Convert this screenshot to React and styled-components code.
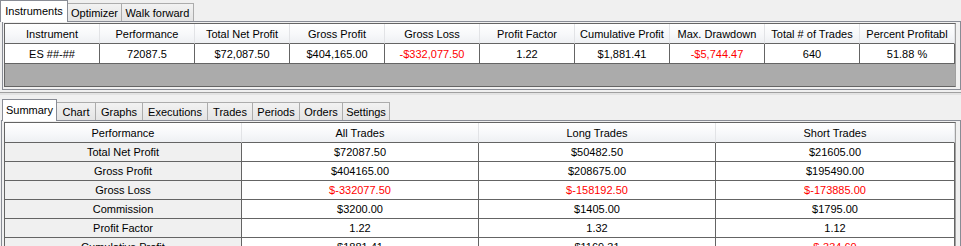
/*--------------------------
    Import
--------------------------*/
import React from 'react';
import styled, { createGlobalStyle } from 'styled-components';

/*--------------------------
    Variable
--------------------------*/
const TOP_TABS = [
    { label: 'Instruments', width: 68, active: true },
    { label: 'Optimizer', width: 54 },
    { label: 'Walk forward', width: 72 },
];

const BOTTOM_TABS = [
    { label: 'Summary', width: 55, active: true },
    { label: 'Chart', width: 39 },
    { label: 'Graphs', width: 47 },
    { label: 'Executions', width: 65 },
    { label: 'Trades', width: 45 },
    { label: 'Periods', width: 47 },
    { label: 'Orders', width: 43 },
    { label: 'Settings', width: 47 },
];

const INSTRUMENT_HEADERS = [
    'Instrument', 'Performance', 'Total Net Profit', 'Gross Profit', 'Gross Loss',
    'Profit Factor', 'Cumulative Profit', 'Max. Drawdown', 'Total # of Trades', 'Percent Profitabl',
];

const INSTRUMENT_ROW = [
    { v: 'ES ##-##' },
    { v: '72087.5' },
    { v: '$72,087.50' },
    { v: '$404,165.00' },
    { v: '-$332,077.50', neg: true },
    { v: '1.22' },
    { v: '$1,881.41' },
    { v: '-$5,744.47', neg: true },
    { v: '640' },
    { v: '51.88 %' },
];

const SUMMARY_HEADERS = ['Performance', 'All Trades', 'Long Trades', 'Short Trades'];

const SUMMARY_ROWS = [
    { label: 'Total Net Profit', values: ['$72087.50', '$50482.50', '$21605.00'] },
    { label: 'Gross Profit', values: ['$404165.00', '$208675.00', '$195490.00'] },
    { label: 'Gross Loss', values: ['$-332077.50', '$-158192.50', '$-173885.00'], neg: [true, true, true] },
    { label: 'Commission', values: ['$3200.00', '$1405.00', '$1795.00'] },
    { label: 'Profit Factor', values: ['1.22', '1.32', '1.12'] },
    { label: 'Cumulative Profit', values: ['$1881.41', '$1169.31', '$-334.60'], neg: [false, false, true] },
];

/*--------------------------
    Styled
--------------------------*/
const GlobalStyle = createGlobalStyle`
    html, body {
        margin: 0;
        padding: 0;
        background-color: #f0f0f0;
        overflow: hidden;
    }
    body {
        font-family: "Liberation Sans", Arial, sans-serif;
        font-size: 11px;
        color: #000;
    }
`;
const Window = styled.div`
    width: 961px;
    height: 246px;
    overflow: hidden;
    display: flex;
    flex-direction: column;
`;
const TabStrip = styled.div`
    display: flex;
    align-items: flex-end;
    height: 21px;
    padding-left: ${props => props.indent}px;
    position: relative;
    z-index: 2;
    flex-shrink: 0;
`;
const Tab = styled.div`
    box-sizing: border-box;
    width: ${props => props.width}px;
    height: ${props => props.active ? 22 : 18}px;
    margin-bottom: ${props => props.active ? -1 : 0}px;
    padding-bottom: ${props => props.active ? 1 : 0}px;
    display: flex;
    align-items: center;
    justify-content: center;
    white-space: nowrap;
    background: ${props => props.active ? '#ffffff' : 'linear-gradient(#f2f2f2, #e4e4e4)'};
    border: 1px solid ${props => props.active ? '#898c95' : '#acacac'};
    border-bottom: none;
    border-left-width: ${props => props.first || props.active ? 1 : 0}px;
`;
const Panel = styled.div`
    box-sizing: border-box;
    margin-left: ${props => props.indent}px;
    padding: 1px 4px 2px ${props => props.padLeft}px;
    border: 1px solid #898c95;
    background-color: #f0f0f0;
    flex-shrink: 0;
`;
const BottomPanel = styled(Panel)`
    border-bottom: none;
    flex: 1;
`;
const Splitter = styled.div`
    height: 9px;
    flex-shrink: 0;
    box-sizing: border-box;
    padding-top: 2px;
    &::before {
        content: '';
        display: block;
        height: 1px;
        background-color: #a0a0a0;
        border-bottom: 2px solid #e3e3e3;
    }
`;
const Grid = styled.div`
    width: 950px;
    display: grid;
    grid-template-columns: ${props => props.columns};
    border: 1px solid #646464;
    border-right-color: #a0a0a0;
    background-color: #ababab;
`;
const HeaderCell = styled.div`
    box-sizing: border-box;
    height: 20px;
    display: flex;
    align-items: center;
    justify-content: center;
    white-space: nowrap;
    overflow: hidden;
    background: linear-gradient(#ffffff 0%, #f7f8fa 55%, #eef0f3 100%);
    border-right: 1px solid #e2e3e6;
    border-bottom: 1px solid #646464;
`;
const Cell = styled.div`
    box-sizing: border-box;
    height: ${props => props.h}px;
    display: flex;
    align-items: center;
    justify-content: center;
    white-space: nowrap;
    overflow: hidden;
    background-color: ${props => props.shade ? '#f0f0f0' : '#ffffff'};
    color: ${props => props.neg ? '#ff0000' : '#000000'};
    border-right: 1px solid #646464;
    border-bottom: 1px solid #646464;
`;
const EmptyArea = styled.div`
    grid-column: 1 / -1;
    height: 22px;
`;

/*--------------------------
    Main Component
--------------------------*/
const renderTabs = (tabs, indent) => (
    <TabStrip indent={indent}>
        {tabs.map((tab, i) => (
            <Tab key={tab.label} width={tab.width} active={tab.active} first={i === 0}>
                {tab.label}
            </Tab>
        ))}
    </TabStrip>
);

export default function App() {

    return (
        <>
            <GlobalStyle />
            <Window>
                {renderTabs(TOP_TABS, 0)}
                <Panel indent={2} padLeft={1}>
                    <Grid columns="repeat(10, 95px)">
                        {INSTRUMENT_HEADERS.map(h => (
                            <HeaderCell key={h}>{h}</HeaderCell>
                        ))}
                        {INSTRUMENT_ROW.map((c, i) => (
                            <Cell key={i} h={20} neg={c.neg}>{c.v}</Cell>
                        ))}
                        <EmptyArea />
                    </Grid>
                </Panel>
                <Splitter />
                {renderTabs(BOTTOM_TABS, 2)}
                <BottomPanel indent={1} padLeft={2}>
                    <Grid columns="237px 237px 237px 239px">
                        {SUMMARY_HEADERS.map(h => (
                            <HeaderCell key={h}>{h}</HeaderCell>
                        ))}
                        {SUMMARY_ROWS.map(row => (
                            <React.Fragment key={row.label}>
                                <Cell h={19} shade>{row.label}</Cell>
                                {row.values.map((v, i) => (
                                    <Cell key={i} h={19} neg={row.neg && row.neg[i]}>{v}</Cell>
                                ))}
                            </React.Fragment>
                        ))}
                    </Grid>
                </BottomPanel>
            </Window>
        </>
    );
}
